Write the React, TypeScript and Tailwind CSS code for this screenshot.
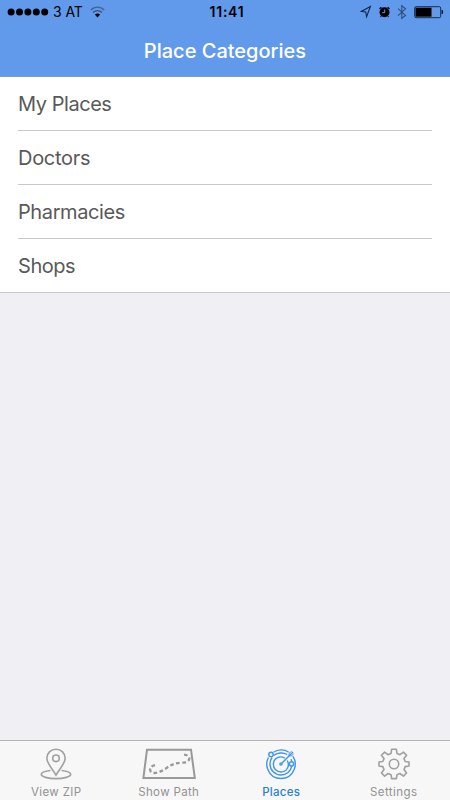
import React from "react";

function StatusBar() {
  return (
    <div className="relative flex h-6 items-center justify-between text-black">
      <div className="flex items-center pl-[7px]">
        <svg width="42" height="10" viewBox="0 0 42 10" fill="currentColor">
          {[4.1, 12.5, 20.9, 29.3, 37.7].map((x) => (
            <circle key={x} cx={x} cy="5" r="3.5" />
          ))}
        </svg>
        <span className="ml-1 w-[31px] whitespace-nowrap text-[14px] leading-6 tracking-[-0.1px]">3 AT</span>
        <svg className="ml-[6px]" width="15" height="12" viewBox="0 0 15 12" fill="none" strokeWidth="1.4">
          <path d="M.8 4.1C4.6.1 10.4.1 14.2 4.1" stroke="#406594" />
          <path d="M3 6.6C5.7 4 9.3 4 12 6.6" stroke="#315480" />
          <path d="M4.9 8.4Q7.5 6.4 10.1 8.4L7.5 11.4Z" fill="#000" />
        </svg>
      </div>
      <span className="absolute inset-x-0 pl-[4px] text-center text-[14px] font-semibold leading-6 tracking-[0.75px]">11:41</span>
      <svg width="90" height="24" viewBox="0 0 90 24" fill="none">
        <path d="M10.4 6.4L1.2 11.4L5.7 12L6.6 16.8Z" stroke="#102643" strokeWidth="1.1" strokeLinejoin="miter" />
        <circle cx="24.5" cy="12.3" r="5" fill="#000" />
        <path d="M19.5 8.7L21.4 7.2M27.6 7.2L29.5 8.7M21.2 16.3L20.5 17M27.8 16.3L28.5 17" stroke="#000" strokeWidth="1.2" />
        <path d="M24.7 9.5V12.7H22.2" stroke="#639aea" strokeWidth="1" />
        <path d="M38 8.6L45.5 15.4L41.8 18.4V5.7L45.5 8.8L38 15.6" stroke="#2d4d7a" strokeWidth="1.1" />
        <rect x="54.7" y="6.7" width="26" height="11" rx="1.4" stroke="#182e4c" strokeWidth="1" />
        <rect x="55.5" y="7.7" width="16" height="9" fill="#000" />
        <path d="M82 10Q83.5 12 82 14Z" fill="#000" stroke="#000" strokeWidth=".6" />
      </svg>
    </div>
  );
}

function PinIcon() {
  return (
    <svg width="32" height="32" viewBox="0 0 32 32" fill="none" stroke="#a0a0a0" strokeWidth="1.6">
      <path d="M16 27.2C12.4 20.6 6.8 15.3 6.8 10.3C6.8 5.2 10.8 1.3 16 1.3S25.2 5.2 25.2 10.3C25.2 15.3 19.6 20.6 16 27.2Z" />
      <circle cx="16" cy="10.3" r="3.3" />
      <path d="M10.5 22.5C5.4 23 1.3 24.2 1.3 26.3C1.3 28.8 7.8 30.6 16 30.6S30.7 28.8 30.7 26.3C30.7 24.2 26.6 23 21.5 22.5" />
    </svg>
  );
}

function PathIcon() {
  return (
    <svg width="54" height="32" viewBox="0 0 54 32" fill="none" stroke="#999999">
      <path d="M5 1.7H49L52.8 29.9H1.4Z" strokeWidth="2" />
      <path d="M13 17.1C8.2 18.2 7.5 20.6 8.6 23.2C10 26.4 17.2 25.2 23.4 20.8C29 16.6 33.5 14.8 40 14.7C49.5 14.6 49.5 6.7 41.2 6.5" strokeWidth="2.3" strokeDasharray="3.7 2.5" />
    </svg>
  );
}

function RadarIcon() {
  return (
    <svg width="32" height="32" viewBox="0 0 32 32" fill="none" stroke="#4294e4" strokeWidth="1.4">
      <path d="M8.5 4.2C12.8 1.1 19.3 1 23.8 4.2M27.8 8.1C30.3 11.7 31 17 29.2 21.4C26.8 27.2 21.8 30.5 16 30.5S5 27.1 2.7 21.2C1.2 17.2 1.5 13 3.5 9.5" />
      <path d="M8.7 7.6C11.8 4.8 17.7 3.9 22.2 6.5M26 11.2C26.4 12 26.7 12.9 26.9 13.7M26.8 18.1C25.7 23.2 21.5 27 16 27C9.9 27 5 22.1 5 16C5 13.6 5.7 11.4 7 9.5" />
      <path d="M19.8 10.1C14.4 6.9 8.4 10.8 8.4 16.4C8.4 20.6 11.8 24 16 24C21.8 24 25.2 17.9 22.2 12.5" />
      <circle cx="6" cy="6.4" r="2.2" />
      <circle cx="26.5" cy="15.9" r="2.1" />
      <circle cx="16" cy="16" r="1.1" />
      <path d="M17 15L28 4" strokeWidth="1.4" />
      <path d="M24 7.8V5.4L26.6 3.2M24.2 7.8H26.6L28.8 5.6" strokeWidth="1" />
    </svg>
  );
}

function GearIcon() {
  return (
    <svg width="32" height="32" viewBox="0 0 32 32" fill="none" stroke="#a0a0a0" strokeWidth="1.6" strokeLinejoin="round">
      <path d="M13.6 1.3H18.4L19 5.5L22 6.7L25.4 4.1L28.6 7.2L26 10.6L27.2 13.5L31 14V18L27.2 18.6L26 21.5L28.5 25L25.4 28.1L21.9 25.5L19 26.7L18.4 30.6H13.6L13 26.7L10.1 25.5L6.6 28.1L3.5 25L6 21.5L4.8 18.6L1 18V14L4.8 13.5L6 10.6L3.4 7.2L6.6 4.1L10 6.7L13 5.5Z" />
      <circle cx="16" cy="16" r="4.7" />
    </svg>
  );
}

const categories = [
  { name: "My Places", spacing: "tracking-[-0.45px]" },
  { name: "Doctors", spacing: "tracking-[-0.3px]" },
  { name: "Pharmacies", spacing: "tracking-[-0.4px]" },
  { name: "Shops", spacing: "tracking-[-0.45px]" },
];

const tabs = [
  { name: "View ZIP", icon: <PinIcon />, style: "text-[#929292] tracking-[0.35px]" },
  { name: "Show Path", icon: <PathIcon />, style: "text-[#929292] tracking-[0.35px]" },
  { name: "Places", icon: <RadarIcon />, style: "text-[#2581d3] tracking-[0.3px] font-medium" },
  { name: "Settings", icon: <GearIcon />, style: "text-[#929292] tracking-[0.45px]" },
];

export default function App() {
  return (
    <div className="flex h-[800px] w-[450px] flex-col overflow-hidden bg-[#efeff4] font-['Inter','Liberation_Sans',sans-serif]">
      <header className="h-[77px] shrink-0 border-b border-[#7e9bc8] bg-[#629aeb]">
        <StatusBar />
        <h1 className="text-center text-[20px] font-medium leading-[54px] text-white">Place Categories</h1>
      </header>
      <main className="grow">
        <ul className="border-b border-[#c8c7cc] bg-white px-[18px]">
          {categories.map((item) => (
            <li key={item.name} className={`h-[54px] border-b border-[#c8c7cc] text-[20px] font-normal leading-[54px] text-[#595959] last:h-[53px] last:border-b-0 ${item.spacing}`}>
              {item.name}
            </li>
          ))}
        </ul>
      </main>
      <nav className="grid h-[60px] grid-cols-4 border-t border-[#b5b5b9] bg-[#f7f7f7]">
        {tabs.map((tab) => (
          <button key={tab.name} className={`flex flex-col items-center pt-[7px] text-[11.5px] leading-4 ${tab.style}`}>
            {tab.icon}
            <span className="mt-1 whitespace-nowrap">{tab.name}</span>
          </button>
        ))}
      </nav>
    </div>
  );
}
